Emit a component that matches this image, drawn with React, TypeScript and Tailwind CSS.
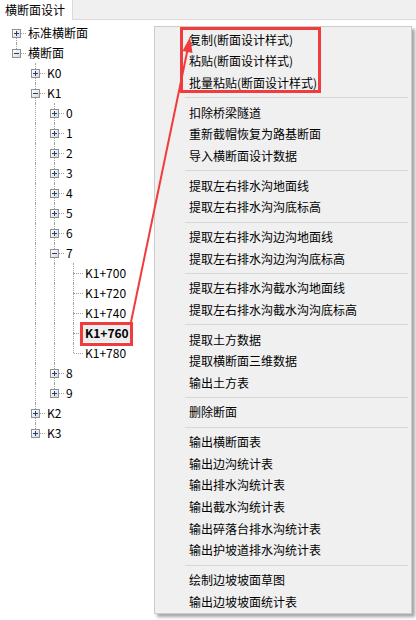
import React from 'react';

type Node = { label: string; level: number; kind: 'plus' | 'minus' | 'leaf'; selected?: boolean };

const nodes: Node[] = [
  { label: '标准横断面', level: 0, kind: 'plus' },
  { label: '横断面', level: 0, kind: 'minus' },
  { label: 'K0', level: 1, kind: 'plus' },
  { label: 'K1', level: 1, kind: 'minus' },
  { label: '0', level: 2, kind: 'plus' },
  { label: '1', level: 2, kind: 'plus' },
  { label: '2', level: 2, kind: 'plus' },
  { label: '3', level: 2, kind: 'plus' },
  { label: '4', level: 2, kind: 'plus' },
  { label: '5', level: 2, kind: 'plus' },
  { label: '6', level: 2, kind: 'plus' },
  { label: '7', level: 2, kind: 'minus' },
  { label: 'K1+700', level: 3, kind: 'leaf' },
  { label: 'K1+720', level: 3, kind: 'leaf' },
  { label: 'K1+740', level: 3, kind: 'leaf' },
  { label: 'K1+760', level: 3, kind: 'leaf', selected: true },
  { label: 'K1+780', level: 3, kind: 'leaf' },
  { label: '8', level: 2, kind: 'plus' },
  { label: '9', level: 2, kind: 'plus' },
  { label: 'K2', level: 1, kind: 'plus' },
  { label: 'K3', level: 1, kind: 'plus' },
];

// does a later sibling exist at `level` before the branch closes
function continues(from: number, level: number) {
  for (let j = from + 1; j < nodes.length; j++) {
    if (nodes[j].level < level) return false;
    if (nodes[j].level === level) return true;
  }
  return false;
}

const menuGroups: string[][] = [
  ['复制(断面设计样式)', '粘贴(断面设计样式)', '批量粘贴(断面设计样式)'],
  ['扣除桥梁隧道', '重新截帽恢复为路基断面', '导入横断面设计数据'],
  ['提取左右排水沟地面线', '提取左右排水沟沟底标高'],
  ['提取左右排水沟边沟地面线', '提取左右排水沟边沟沟底标高'],
  ['提取左右排水沟截水沟地面线', '提取左右排水沟截水沟沟底标高'],
  ['提取土方数据', '提取横断面三维数据', '输出土方表'],
  ['删除断面'],
  ['输出横断面表', '输出边沟统计表', '输出排水沟统计表', '输出截水沟统计表', '输出碎落台排水沟统计表', '输出护坡道排水沟统计表'],
  ['绘制边坡坡面草图', '输出边坡坡面统计表'],
];

function ExpandBox({ open }: { open: boolean }) {
  return (
    <span className="absolute left-[5px] top-[6px] w-[9px] h-[9px] border border-[#919191] bg-gradient-to-br from-white to-[#d8d8d8] flex items-center justify-center">
      <span className="absolute w-[5px] h-px bg-[#1c3e80]" />
      {!open && <span className="absolute w-px h-[5px] bg-[#1c3e80]" />}
    </span>
  );
}

function TreeRow({ node, index }: { node: Node; index: number }) {
  const cols = [];
  for (let i = 0; i < node.level; i++) {
    cols.push(
      <span key={i} className="relative w-[19px] h-[20px] shrink-0">
        {continues(index, i) && (
          <span className="absolute left-[9px] top-0 h-[20px] border-l border-dotted border-[#a0a0a0]" />
        )}
      </span>
    );
  }
  const hasTop = node.level > 0 || index > 0;
  const hasBottom = continues(index, node.level);

  return (
    <div className="flex items-center h-[20px]">
      {cols}
      <span className="relative w-[19px] h-[20px] shrink-0">
        {hasTop && <span className="absolute left-[9px] top-0 h-[10px] border-l border-dotted border-[#a0a0a0]" />}
        {hasBottom && <span className="absolute left-[9px] top-[10px] h-[10px] border-l border-dotted border-[#a0a0a0]" />}
        <span className="absolute left-[10px] top-[10px] w-[9px] border-t border-dotted border-[#a0a0a0]" />
        {node.kind !== 'leaf' && <ExpandBox open={node.kind === 'minus'} />}
      </span>
      {node.selected ? (
        <span className="px-[2px] bg-[#eeeeee] font-bold text-[12px] leading-[18px] text-black">{node.label}</span>
      ) : (
        <span className="ml-[2px] text-[12px] leading-[20px] text-black whitespace-nowrap">{node.label}</span>
      )}
    </div>
  );
}

export default function App() {
  return (
    <div className="relative w-[416px] h-[620px] bg-white overflow-hidden font-['Noto_Sans_CJK_SC','Microsoft_YaHei',sans-serif] text-black">
      {/* tab strip */}
      <div className="flex h-[20px] bg-[#f0f0f0] border-b border-[#d9d9d9]">
        <div className="w-[73px] h-[20px] bg-white border-r border-[#d9d9d9] pl-[5px] text-[12px] leading-[20px]">
          横断面设计
        </div>
      </div>

      {/* tree */}
      <div className="pl-[7px] pt-[3px]">
        {nodes.map((n, i) => (
          <TreeRow key={i} node={n} index={i} />
        ))}
      </div>

      {/* context menu */}
      <div className="absolute left-[154px] top-[26px] w-[258px] h-[588px] bg-[#f0f0f0] border border-[#cccccc] shadow-[3px_3px_3px_rgba(0,0,0,0.35)] pt-[2px]">
        {menuGroups.map((group, gi) => (
          <div key={gi}>
            {gi > 0 && (
              <div className="h-[8px] flex items-center ml-[30px] mr-[3px]">
                <div className="w-full h-px bg-[#d7d7d7]" />
              </div>
            )}
            {group.map((item) => (
              <div key={item} className="h-[21.65px] flex items-center pl-[34px] text-[12px] whitespace-nowrap">
                {item}
              </div>
            ))}
          </div>
        ))}
      </div>

      {/* annotations */}
      <div className="absolute left-[80px] top-[322px] w-[53px] h-[24px] border-[3px] border-[#f03c3c]" />
      <div className="absolute left-[180px] top-[27px] w-[141px] h-[66px] border-[3px] border-[#f03c3c]" />
      <svg className="absolute left-0 top-0 pointer-events-none" width="416" height="620">
        <line x1="131" y1="322" x2="187.5" y2="50" stroke="#f03c3c" strokeWidth="2" />
        <polygon points="190,37 192.5,53 182.5,51" fill="#f03c3c" />
      </svg>
    </div>
  );
}
